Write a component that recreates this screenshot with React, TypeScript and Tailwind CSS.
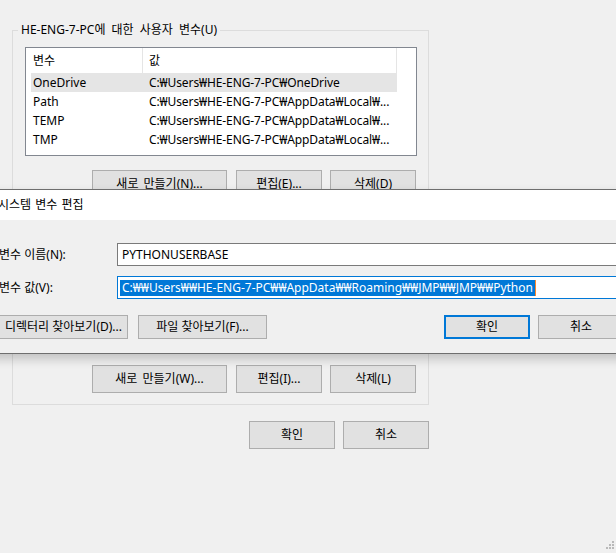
import React from "react";

const btn =
  "flex items-center justify-center border border-[#adadad] bg-[#e1e1e1] text-black";

function ListBox({ rows, h }: { rows: [string, string][]; h: string }) {
  return (
    <div className={`ml-[12px] w-[392px] ${h} border border-[#828790] bg-white`}>
      <div className="flex h-[25px] w-[371px] items-center border-r border-[#e5e5e5]">
        <div className="flex h-full w-[117px] items-center border-r border-[#e5e5e5] pl-[7px]">변수</div>
        <div className="pl-[6px]">값</div>
      </div>
      <div className="pl-[5px]">
        {rows.map(([a, b], i) => (
          <div
            key={i}
            className={`flex h-[19px] w-[366px] items-center ${i === 0 ? "bg-[#e5e5e5]" : ""}`}
          >
            <div className="w-[118px] pl-[2px]">{a}</div>
            <div className="whitespace-nowrap tracking-[-0.1px]">{b}</div>
          </div>
        ))}
      </div>
    </div>
  );
}

export default function App() {
  const userRows: [string, string][] = [
    ["OneDrive", "C:₩Users₩HE-ENG-7-PC₩OneDrive"],
    ["Path", "C:₩Users₩HE-ENG-7-PC₩AppData₩Local₩..."],
    ["TEMP", "C:₩Users₩HE-ENG-7-PC₩AppData₩Local₩..."],
    ["TMP", "C:₩Users₩HE-ENG-7-PC₩AppData₩Local₩..."],
  ];
  return (
    <div className="relative h-[553px] w-[616px] overflow-hidden bg-[#f0f0f0] font-['Noto_Sans','Noto_Sans_CJK_KR',sans-serif] text-[12px] leading-[16px] text-black">
      {/* background window */}
      <div className="pl-[12px] pt-[22px]">
        <fieldset className="w-[417px] border border-[#dcdcdc] px-0 pb-[11px]">
          <legend className="ml-[5px] px-[3px] leading-[16px] [word-spacing:3px]">HE-ENG-7-PC에 대한 사용자 변수(U)</legend>
          <div className="mt-[9px]">
            <ListBox rows={userRows} h="h-[109px]" />
          </div>
          <div className="mt-[14px] flex justify-end pr-[12px]">
            <div className={`${btn} h-[28px] w-[135px] [word-spacing:2px]`}>새로 만들기(N)...</div>
            <div className={`${btn} ml-[9px] h-[28px] w-[86px]`}>편집(E)...</div>
            <div className={`${btn} ml-[8px] h-[28px] w-[86px]`}>삭제(D)</div>
          </div>
        </fieldset>
        <fieldset className="mt-[4px] w-[417px] border border-[#dcdcdc] px-0 pb-[11px]">
          <legend className="ml-[5px] px-[3px] leading-[16px]">시스템 변수(S)</legend>
          <div className="mt-[9px]">
            <ListBox rows={[]} h="h-[112px]" />
          </div>
          <div className="mt-[14px] flex justify-end pr-[12px]">
            <div className={`${btn} h-[28px] w-[135px] [word-spacing:2px]`}>새로 만들기(W)...</div>
            <div className={`${btn} ml-[9px] h-[28px] w-[86px]`}>편집(I)...</div>
            <div className={`${btn} ml-[8px] h-[28px] w-[86px]`}>삭제(L)</div>
          </div>
        </fieldset>
        <div className="mt-[16px] flex w-[417px] justify-end">
          <div className={`${btn} h-[28px] w-[86px]`}>확인</div>
          <div className={`${btn} ml-[8px] h-[28px] w-[86px]`}>취소</div>
        </div>
      </div>

      {/* resize grip */}
      <svg className="absolute bottom-0 right-0" width="14" height="14" viewBox="0 0 14 14">
        <rect x="10" y="2" width="2" height="2" fill="#b9b9b9" />
        <rect x="7" y="5" width="2" height="2" fill="#b9b9b9" />
        <rect x="10" y="5" width="2" height="2" fill="#b9b9b9" />
        <rect x="4" y="8" width="2" height="2" fill="#b9b9b9" />
        <rect x="7" y="8" width="2" height="2" fill="#b9b9b9" />
        <rect x="10" y="8" width="2" height="2" fill="#b9b9b9" />
      </svg>

      {/* overlay dialog */}
      <div className="absolute left-[-13px] top-[189px] w-[720px] border border-[#6e6e6e] bg-[#f0f0f0] shadow-[0_5px_10px_rgba(0,0,0,0.2)]">
        <div className="flex h-[30px] items-center bg-white pl-[10px] [word-spacing:1px]">시스템 변수 편집</div>
        <div className="pl-[11px] pb-[14px] pt-[23px]">
          <div className="flex items-center">
            <div className="w-[118px]">변수 이름(N):</div>
            <div className="flex h-[23px] w-[580px] items-center border border-[#7a7a7a] bg-white pl-[4px]">
              PYTHONUSERBASE
            </div>
          </div>
          <div className="mt-[10px] flex items-center">
            <div className="w-[118px]">변수 값(V):</div>
            <div className="flex h-[23px] w-[580px] items-center border border-[#0078d7] bg-white pl-[2px]">
              <span className="whitespace-nowrap bg-[#0078d7] px-[2px] leading-[16px] text-white">
                C:₩₩Users₩₩HE-ENG-7-PC₩₩AppData₩₩Roaming₩₩JMP₩₩JMP₩₩Python
              </span>
              <span className="h-[16px] w-[1px] bg-[#ff8728]" />
            </div>
          </div>
          <div className="mt-[16px] flex">
            <div className={`${btn} h-[24px] w-[129px]`}>디렉터리 찾아보기(D)...</div>
            <div className={`${btn} ml-[10px] h-[24px] w-[129px]`}>파일 찾아보기(F)...</div>
            <div className="ml-[177px] flex h-[24px] w-[86px] items-center justify-center border-2 border-[#0078d7] bg-[#e1e1e1]">
              확인
            </div>
            <div className={`${btn} ml-[8px] h-[24px] w-[86px]`}>취소</div>
          </div>
        </div>
      </div>
    </div>
  );
}
